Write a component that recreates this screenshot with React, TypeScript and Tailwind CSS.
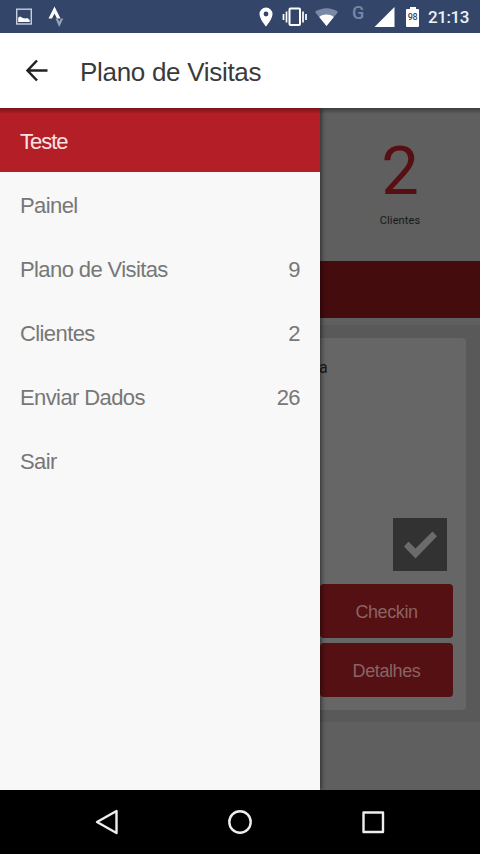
import { useState } from "react";

const menuItems = [
    { label: "Painel" },
    { label: "Plano de Visitas", count: 9 },
    { label: "Clientes", count: 2 },
    { label: "Enviar Dados", count: 26 },
    { label: "Sair" },
];

function StatusBar() {
    return (
        <div className="h-[33px] shrink-0 bg-[#334669] flex items-center text-white font-['Roboto',sans-serif]">
            <svg className="ml-4 w-4 h-[17px]" viewBox="0 0 16 17" fill="none">
                <rect x="0.7" y="1.2" width="14.6" height="14.8" stroke="#c5cddd" strokeWidth="1.4" />
                <path d="M2.200 14v-4.500l2-1 2.500 1.500 2.500.500 2-.5 2.500 2v2z" fill="#fff" />
            </svg>
            <svg className="ml-4 w-4 h-[22px]" viewBox="0 0 16 22">
                <path d="M0.500 12.500 6.500 0.500 12.500 12.500H9L6.500 7.500 4 12.500z" fill="#fff" />
                <path d="M7.500 12.500h2.200l1.500 3.200 1.800-3.200h2.200L11.200 21z" fill="#98a4bc" />
            </svg>
            <svg className="ml-[195px] w-[14px] h-5" viewBox="0 0 14 20">
                <path d="M7 .5a6.500 6.500 0 0 0-6.500 6.500C.5 12 7 19.500 7 19.500S13.500 12 13.500 7A6.500 6.500 0 0 0 7 .5zM7 9.400a2.400 2.400 0 1 1 0-4.800 2.400 2.400 0 0 1 0 4.800z" fill="#fff" />
            </svg>
            <svg className="ml-[9px] w-[26px] h-5" viewBox="0 0 26 20" fill="none" stroke="#fff">
                <rect x="7.500" y="1.500" width="10.500" height="16.500" rx="1" strokeWidth="2" />
                <path d="M4.500 4.500v11M21 4.500v11" strokeWidth="1.700" />
                <path d="M1.500 7v6M24 7v6" strokeWidth="1.700" />
            </svg>
            <svg className="ml-[7px] w-6 h-[18px]" viewBox="0 0 24 18">
                <path d="M0 4C7-1 16-1 23 4L11.500 18z" fill="#7c89a5" />
                <path d="M4.200 9c4.500-3.200 10-3.200 14.600 0L11.500 18z" fill="#fff" />
            </svg>
            <span className="ml-[13px] w-[14px] mb-2 text-[18px] leading-5 font-medium text-[#7787a6]">G</span>
            <svg className="ml-2 w-[21px] h-5" viewBox="0 0 21 20">
                <path d="M20.500 0v20H0.500z" fill="#fff" />
            </svg>
            <div className="ml-[11px] flex flex-col items-center">
                <div className="w-[6px] h-[2px] bg-white" />
                <div className="w-[13px] h-[18px] rounded-[1px] bg-white flex items-center justify-center text-[9px] font-medium tracking-[-0.4px] text-[#334669]">98</div>
            </div>
            <span className="ml-[9px] text-[17px] leading-5 font-medium tracking-[-0.4px] text-[#eef2fa]">21:13</span>
        </div>
    );
}

function VisitPage() {
    return (
        <div className="h-full bg-[#5f5f5f]">
            <div className="h-[153px] flex justify-end font-['Roboto',sans-serif]">
                <div className="w-40 flex flex-col items-center pt-[28px]">
                    <div className="text-[67px] leading-[70px] text-[#580f13]">2</div>
                    <div className="mt-[7px] text-[11px] leading-[15px] tracking-[0.1px] text-[#181818]">Clientes</div>
                </div>
            </div>
            <div className="h-[57px] bg-[#450c0e]" />
            <div className="h-[7px]" />
            <div className="h-[397px] bg-[#595959] px-[14px] pt-[13px]">
                <div className="h-[372px] rounded-[4px] bg-[#666666] px-[13px] pt-[20px] flex flex-col">
                    <div className="pl-[292px] text-[16px] leading-5 text-[#181818] font-['Roboto',sans-serif]">a</div>
                    <div className="mt-[140px] mr-[6px] self-end w-[54px] h-[53px] bg-[#323232] flex items-center justify-center">
                        <svg className="w-9 h-7" viewBox="0 0 36 28">
                            <path d="M2 15.500 6.500 10.500 13.500 17.500 30.500 0.500 35 5.300 13.500 27.500z" fill="#6b6b6b" />
                        </svg>
                    </div>
                    <div className="mt-[13px] self-end w-[265px] flex flex-col gap-[5px] pl-[132px] text-[18px] tracking-[-0.4px] text-[#8b6364]">
                        <button className="h-[54px] pt-0.5 rounded-[4px] bg-[#541012]">Checkin</button>
                        <button className="h-[54px] pt-0.5 rounded-[4px] bg-[#541012]">Detalhes</button>
                    </div>
                </div>
            </div>
        </div>
    );
}

export default function App() {
    const [selected, setSelected] = useState("");

    return (
        <div className="w-[480px] h-[854px] flex flex-col overflow-hidden bg-black font-['Liberation_Sans',sans-serif]">
            <StatusBar />

            <header className="h-[75px] shrink-0 bg-white flex items-center">
                <button className="ml-[25px]">
                    <svg className="w-6 h-6" viewBox="0 0 24 24" fill="none" stroke="#222" strokeWidth="2.500">
                        <path d="M12 1.500 2.500 11.500 12 21.500M2.500 11.500h20" />
                    </svg>
                </button>
                <h1 className="ml-[31px] pt-[3px] text-[26px] leading-8 tracking-[-0.3px] text-[#3a3a3a]">Plano de Visitas</h1>
            </header>

            <main className="relative h-[682px] shrink-0 overflow-hidden">
                <VisitPage />
                <nav className="absolute inset-y-0 left-0 w-80 bg-[#f8f8f8] shadow-[1px_0_5px_rgba(0,0,0,0.6)] text-[22px] tracking-[-0.6px] text-[#777]">
                    <div className="h-16 px-5 pt-[3px] flex items-center tracking-[-1px] bg-[#b41e26] text-[#fbe3e4]">Teste</div>
                    {menuItems.map((item) => (
                        <button key={item.label} onClick={() => setSelected(item.label)} aria-pressed={selected === item.label} className="w-full h-16 px-5 pt-[3px] flex items-center justify-between">
                            <span>{item.label}</span>
                            <span>{item.count}</span>
                        </button>
                    ))}
                </nav>
                <div className="absolute inset-x-0 top-0 h-[6px] bg-gradient-to-b from-black/35 to-transparent" />
            </main>

            <footer className="h-16 shrink-0 bg-black">
                <svg className="w-full h-16" viewBox="0 0 480 64" fill="none" stroke="#eee" strokeWidth="2.400" strokeLinejoin="round">
                    <path d="M97 32 116.500 21v22z" />
                    <circle cx="240" cy="32" r="10.700" />
                    <rect x="363.500" y="22.500" width="19.500" height="19.500" />
                </svg>
            </footer>
        </div>
    );
}
